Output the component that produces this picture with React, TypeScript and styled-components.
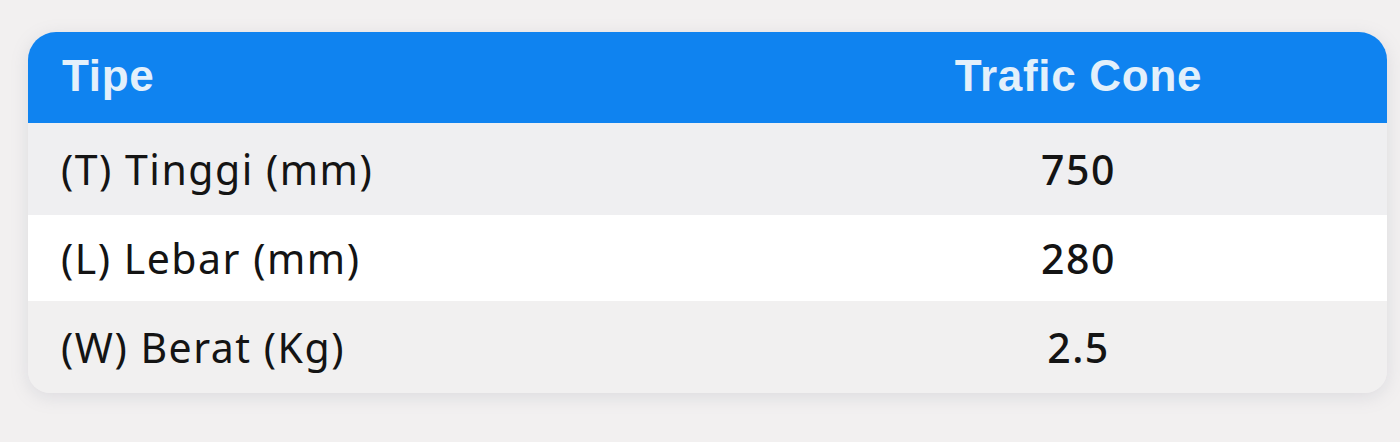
import React from "react";
import styled, { createGlobalStyle } from "styled-components";

const Global = createGlobalStyle`
  html, body { margin: 0; padding: 0; background: #f2f0f0; }
  body { width: 1400px; height: 442px; overflow: hidden; }
`;

const Page = styled.div`
  box-sizing: border-box;
  width: 1400px;
  height: 442px;
  padding: 32px 13px 0 28px;
  background: #f2f0f0;
`;

const Card = styled.div`
  width: 1359px;
  border-radius: 28px 28px 22px 22px;
  overflow: hidden;
  background: #f1f0f1;
  box-shadow: 0 4px 18px rgba(120, 130, 150, 0.18);
`;

const Row = styled.div<{ $bg: string; $h: number }>`
  display: grid;
  grid-template-columns: 742px 1fr;
  align-items: center;
  height: ${(p) => p.$h}px;
  background: ${(p) => p.$bg};
`;

const HeadCell = styled.div<{ $center?: boolean }>`
  font-family: "Liberation Sans", Arial, sans-serif;
  font-weight: 700;
  font-size: 44px;
  letter-spacing: 0.7px;
  color: #e3f0fb;
  padding-left: ${(p) => (p.$center ? "0" : "34px")};
  text-align: ${(p) => (p.$center ? "center" : "left")};
  padding-bottom: 4px;
`;

const Cell = styled.div<{ $center?: boolean }>`
  font-family: "Noto Sans", "Open Sans", sans-serif;
  font-size: 41px;
  letter-spacing: ${(p) => (p.$center ? "1.5px" : "1.5px")};
  font-weight: ${(p) => (p.$center ? 500 : 400)};
  color: #141414;
  padding-left: ${(p) => (p.$center ? "0" : "33px")};
  text-align: ${(p) => (p.$center ? "center" : "left")};
`;

const rows = [
  { label: "(T) Tinggi (mm)", value: "750", bg: "#efeff1", h: 92 },
  { label: "(L) Lebar (mm)", value: "280", bg: "#ffffff", h: 86 },
  { label: "(W) Berat (Kg)", value: "2.5", bg: "#f1f0f0", h: 92 },
];

export default function App() {
  return (
    <>
      <Global />
      <Page>
        <Card>
          <Row $bg="#0f83f0" $h={91}>
            <HeadCell>Tipe</HeadCell>
            <HeadCell $center>Trafic Cone</HeadCell>
          </Row>
          {rows.map((r) => (
            <Row key={r.label} $bg={r.bg} $h={r.h}>
              <Cell>{r.label}</Cell>
              <Cell $center>{r.value}</Cell>
            </Row>
          ))}
        </Card>
      </Page>
    </>
  );
}
